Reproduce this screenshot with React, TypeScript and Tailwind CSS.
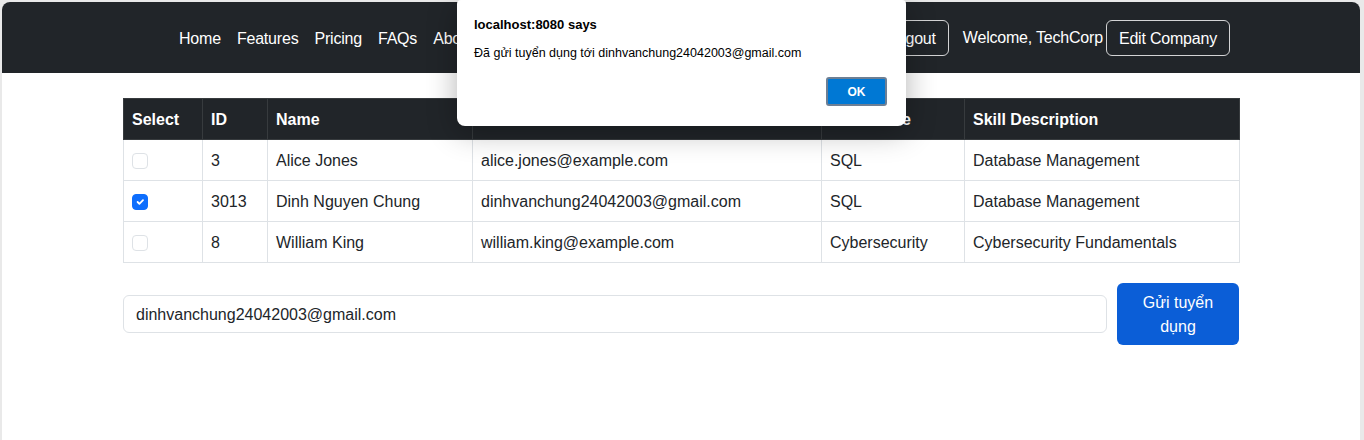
import React from "react";

const rows = [
  { checked: false, id: "3", name: "Alice Jones", email: "alice.jones@example.com", skill: "SQL", desc: "Database Management" },
  { checked: true, id: "3013", name: "Dinh Nguyen Chung", email: "dinhvanchung24042003@gmail.com", skill: "SQL", desc: "Database Management" },
  { checked: false, id: "8", name: "William King", email: "william.king@example.com", skill: "Cybersecurity", desc: "Cybersecurity Fundamentals" },
];

function Checkbox({ checked }: { checked: boolean }) {
  if (checked) {
    return (
      <span className="inline-flex w-4 h-4 rounded-[4px] bg-[#0d6efd] border border-[#0d6efd] items-center justify-center align-middle">
        <svg width="12" height="12" viewBox="0 0 20 20" fill="none">
          <path d="M6 10l3 3 6-6" stroke="#fff" strokeWidth="3" strokeLinecap="round" strokeLinejoin="round" />
        </svg>
      </span>
    );
  }
  return <span className="inline-block w-4 h-4 rounded-[4px] bg-white border border-[#dee2e6] align-middle" />;
}

const cell = "px-2 pt-[9px] pb-[7px] border border-[#dee2e6] whitespace-nowrap";

export default function App() {
  return (
    <div className="relative h-[440px] bg-[#e9e9e9] pt-[2px] pl-[2px] overflow-hidden" style={{ fontFamily: '"Liberation Sans", Arial, sans-serif' }}>
      <div className="w-[1358px] h-[438px] bg-white rounded-t-[8px] overflow-hidden">
        {/* Navbar */}
        <header className="h-[71px] bg-[#212529] flex items-center text-white text-[16px] leading-6">
          <nav className="flex items-center pl-[169px] pt-[2px] tracking-[-0.2px]">
            <a className="px-2">Home</a>
            <a className="px-2">Features</a>
            <a className="px-2">Pricing</a>
            <a className="px-2">FAQs</a>
            <a className="px-2">About</a>
          </nav>
          <div className="ml-auto flex items-center pr-[130px] tracking-[-0.2px]">
            <button className="h-[36px] px-3 pt-[2px] border border-white/80 rounded-md text-white">Logout</button>
            <span className="ml-[14px] pt-[1px]">Welcome, TechCorp</span>
            <button className="ml-[3px] h-[36px] px-[12px] pt-[2px] border border-white/80 rounded-md text-white">Edit Company</button>
          </div>
        </header>

        {/* Content */}
        <main className="w-[1116px] mx-auto mt-[25px] text-[#212529] text-[16px] leading-6">
          <table className="w-[1116px] table-fixed border-collapse">
            <colgroup>
              <col className="w-[79px]" />
              <col className="w-[65px]" />
              <col className="w-[205px]" />
              <col className="w-[349px]" />
              <col className="w-[143px]" />
              <col className="w-[275px]" />
            </colgroup>
            <thead>
              <tr className="bg-[#212529] text-white">
                {["Select", "ID", "Name", "Email", "Skill Name", "Skill Description"].map((h) => (
                  <th key={h} className="text-left font-bold px-2 pt-[9px] pb-[7px] border border-[#373b3e] whitespace-nowrap">{h}</th>
                ))}
              </tr>
            </thead>
            <tbody>
              {rows.map((r) => (
                <tr key={r.id}>
                  <td className="px-2 py-2 border border-[#dee2e6] h-[41px]"><Checkbox checked={r.checked} /></td>
                  <td className={cell}>{r.id}</td>
                  <td className={cell}>{r.name}</td>
                  <td className={cell}>{r.email}</td>
                  <td className={cell}>{r.skill}</td>
                  <td className={cell}>{r.desc}</td>
                </tr>
              ))}
            </tbody>
          </table>

          <div className="mt-[20px] flex items-center gap-[10px]">
            <div className="flex-1 h-[38px] border border-[#dee2e6] rounded-md px-3 pt-[1px] flex items-center">
              dinhvanchung24042003@gmail.com
            </div>
            <button className="w-[122px] bg-[#0b5ed7] text-white rounded-md px-3 pt-[8px] pb-[6px] leading-6 text-center">
              Gửi tuyển dụng
            </button>
          </div>
        </main>
      </div>

      {/* Alert dialog */}
      <div className="absolute left-[457px] top-0 w-[449px] h-[126px] bg-white rounded-b-[8px] rounded-t-[4px] shadow-[0_6px_30px_rgba(0,0,0,0.3)] text-[#000]">
        <div className="absolute left-[17px] top-[17px] text-[13px] font-bold leading-4">localhost:8080 says</div>
        <div className="absolute left-[17px] top-[45px] text-[12.5px] leading-4">Đã gửi tuyển dụng tới dinhvanchung24042003@gmail.com</div>
        <button className="absolute left-[369px] top-[77px] w-[61px] h-[29px] rounded-[3px] border-2 border-[#6d7f94] bg-[#0078d4] text-white text-[12px] font-bold flex items-center justify-center">
          OK
        </button>
      </div>
    </div>
  );
}
